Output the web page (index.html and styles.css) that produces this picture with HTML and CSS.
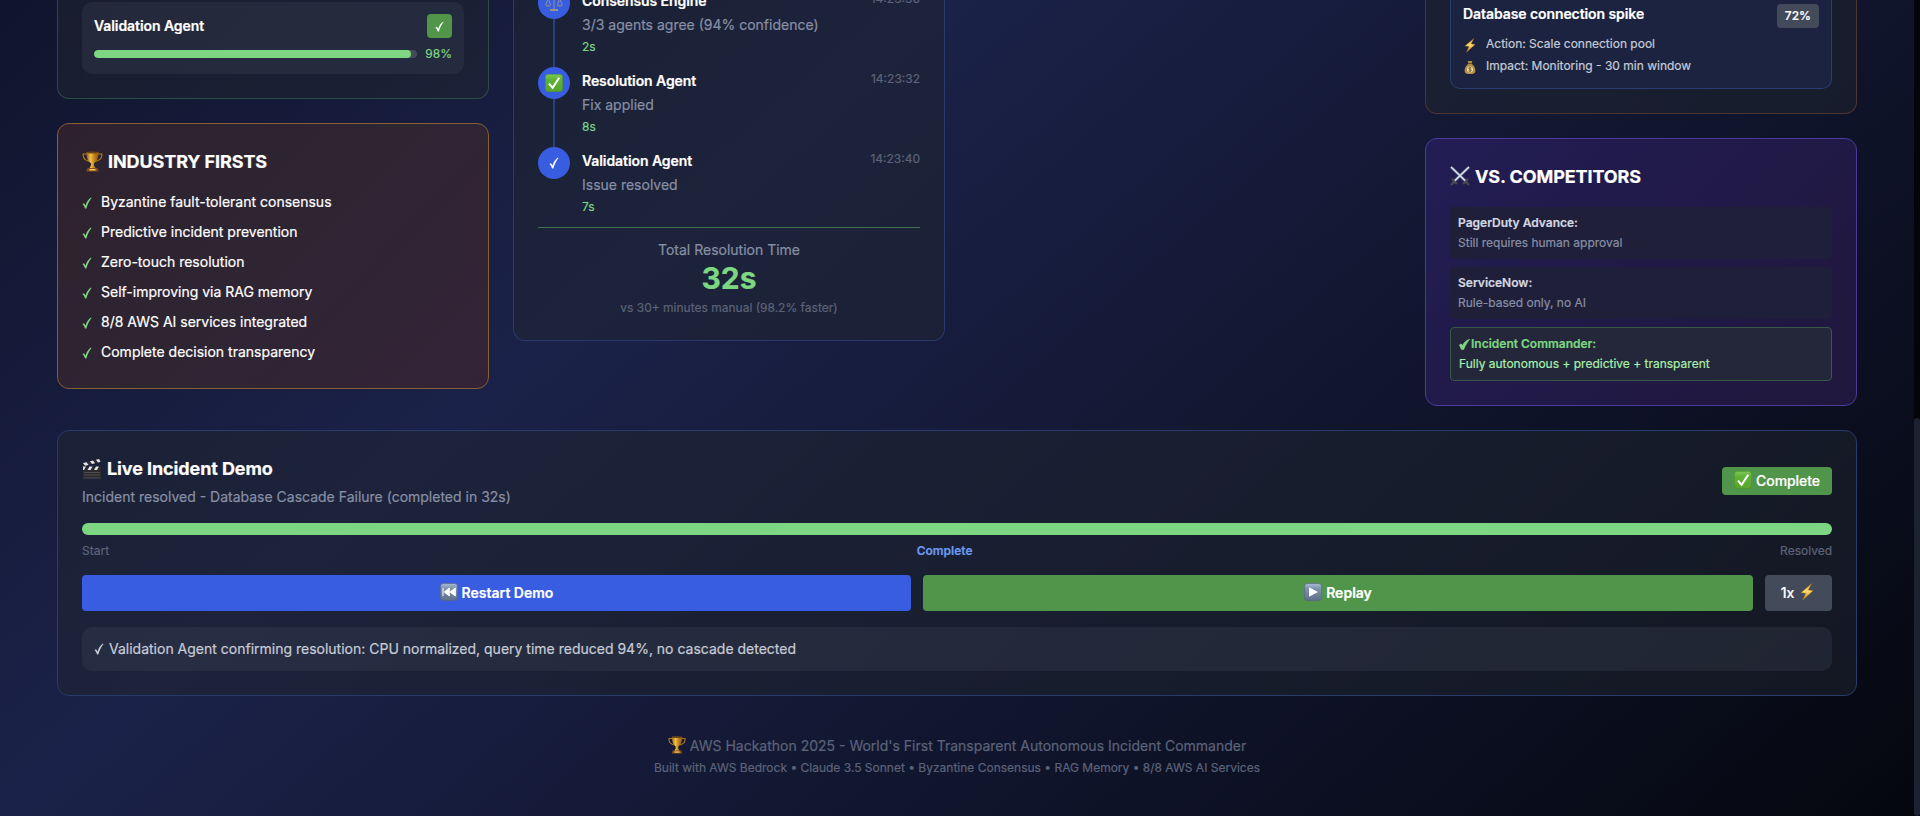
FILE: index.html
```html
<!DOCTYPE html>
<html lang="en">
<head>
<meta charset="utf-8">
<title>Autonomous Incident Commander</title>
<link rel="stylesheet" href="styles.css">
</head>
<body>
<svg class="defs" aria-hidden="true">
  <defs>
    <linearGradient id="gold" x1="0" x2="1"><stop offset="0" stop-color="#8f5a14"/><stop offset=".35" stop-color="#f0c24a"/><stop offset=".6" stop-color="#c88a22"/><stop offset="1" stop-color="#8a5412"/></linearGradient>
    <linearGradient id="grn" x1="0" y1="0" x2="0" y2="1"><stop offset="0" stop-color="#7fc95a"/><stop offset=".3" stop-color="#5fb338"/><stop offset="1" stop-color="#58a52c"/></linearGradient>
    <linearGradient id="key" x1="0" y1="0" x2="0" y2="1"><stop offset="0" stop-color="#a9bcd6"/><stop offset=".3" stop-color="#8093ae"/><stop offset="1" stop-color="#5d6f8a"/></linearGradient>
    <linearGradient id="bolt" x1="0" y1="0" x2="0" y2="1"><stop offset="0" stop-color="#d9952f"/><stop offset=".45" stop-color="#ffe067"/><stop offset="1" stop-color="#c97a25"/></linearGradient>
    <symbol id="i-trophy" viewBox="0 0 21 21">
      <path d="M5 3H1.2C.8 6.2 2.600 9.300 7.400 10.400M16 3h3.800c.4 3.200-1.400 6.300-6.200 7.400" fill="none" stroke="#b07a22" stroke-width="1.200"/>
      <path d="M4.300 1h12.400c-.2 6-1.900 9.600-4.700 11.200v2.300l1.800 3H7.200l1.800-3v-2.300C6.200 10.600 4.500 7 4.300 1z" fill="url(#gold)"/>
      <ellipse cx="10.500" cy="1.500" rx="6" ry=".9" fill="#6e4410"/>
      <path d="M5.500 17h10l1.200 3.500H4.300z" fill="#8a4b16"/><path d="M7.500 18h6v1.500h-6z" fill="#f2cf68"/>
    </symbol>
    <symbol id="i-check" viewBox="0 0 10 12"><path d="M.5 7.100 2 6.200 3.600 8.400C4.800 4.900 6.400 2.200 8.900.6l.6.500C7.200 4 5.600 7.400 4.300 11.600H3.100C2.500 9.900 1.700 8.300.5 7.100z" fill="currentColor"/></symbol>
    <symbol id="i-heavy" viewBox="0 0 11 11"><path d="M.2 6.200C1.200 4.400 2.700 4.700 3.600 6.300 5.200 3.300 7.200 1.200 10.900.1 8.600 2.900 6.400 6.500 4.900 10.300 3.500 11.100 2.300 11 2 10 1.600 8.500 1.100 7.200.2 6.200z" fill="currentColor" stroke="currentColor" stroke-width=".4"/></symbol>
    <symbol id="i-ok" viewBox="0 0 18 18"><rect x=".3" y=".3" width="17.400" height="17.400" rx="3" fill="url(#grn)" stroke="#468f25" stroke-width=".6"/><path d="M4 9.600 7.600 13.800 14.200 3.800" fill="none" stroke="#fff" stroke-width="2"/></symbol>
    <symbol id="i-bolt" viewBox="0 0 14 18"><path d="M11.600.5 1 9.700l4.800.5L2.600 17.300 13 7.700 8.300 7.100z" fill="url(#bolt)" stroke="#b26d1e" stroke-width=".4"/></symbol>
    <symbol id="i-bag" viewBox="0 0 12 14"><path d="M3.700.5h4.600L7.700 3.300C10 5 11.400 7.600 11.400 10.200c0 2.600-1.600 3.300-5.400 3.300S.6 12.800.6 10.200C.6 7.600 2 5 4.300 3.300z" fill="#b08d42"/><path d="M4 3h4" stroke="#6d4d1e" stroke-width="1"/><circle cx="6" cy="9" r="3.100" fill="#ecd9a0"/><path d="M7.500 7.700C6.700 6.800 4.700 7 4.800 8.100c.1 1.100 2.500.6 2.500 1.800 0 1.100-2 1.200-2.700.4M6 6.300v5.400" fill="none" stroke="#70511e" stroke-width=".8"/></symbol>
    <symbol id="i-swords" viewBox="0 0 20 20"><path d="M1 1 16 15.500M19 1 4 15.500" stroke="#6f7a90" stroke-width="2.600"/><path d="M1 1 15 14.500M19 1 5 14.500" stroke="#dde4f0" stroke-width="1.300"/><path d="M2.300 12.500c.5 2.600 2 4.200 5 5M17.700 12.500c-.5 2.600-2 4.200-5 5M4.500 15.500 1 19M15.500 15.500 19 19" fill="none" stroke="#4b4a50" stroke-width="1.900"/></symbol>
    <symbol id="i-clap" viewBox="0 0 20 21"><path d="M1 9h18v10.500a1 1 0 0 1-1 1H2a1 1 0 0 1-1-1z" fill="#2b2b2e"/><path d="M.7 5.200 18 .8l.8 3L1.500 8.200z" fill="#303034"/><path d="M1 5.100l3.500-.9 2 2.700-3.300.9zM8 3.300l3-.8 2 2.700-3 .8zM14 1.800l3-.8 1.500 2.700-2.500.7zM1 8.500h3L2 12H1zM7.500 8.500h3L8.500 12h-3zM14 8.500h3L15 12h-3z" fill="#e5e6e8"/><path d="M2 14.500h16M2 17h16M1.500 20h17" stroke="#59595c" stroke-width=".8"/></symbol>
    <symbol id="i-prev" viewBox="0 0 18 18"><rect x=".4" y=".4" width="17.200" height="17.200" rx="3" fill="url(#key)" stroke="#56657e" stroke-width=".7"/><path d="M3 5v8M9.300 5v8L4.300 9zM15.300 5v8L10 9z" fill="#fff" stroke="#fff" stroke-width="1"/></symbol>
    <symbol id="i-play" viewBox="0 0 18 18"><rect x=".4" y=".4" width="17.200" height="17.200" rx="3" fill="url(#key)" stroke="#56657e" stroke-width=".7"/><path d="M5 4.300v9.400L14 9z" fill="#fff"/></symbol>
    <symbol id="i-scales" viewBox="0 0 18 18"><path d="M9 1v14M3 4.500 9 3l6 1.500M3.200 4.500.8 11M3.200 4.500 5.600 11M14.800 4.500 12.400 11M14.800 4.500 17.200 11" fill="none" stroke="#8a8f9c" stroke-width="1"/><path d="M.4 11h5.600c-.5 2.400-5.100 2.400-5.600 0zM12 11h5.600c-.5 2.400-5.100 2.400-5.600 0z" fill="#7d8394"/><path d="M5 15h8v2H5z" fill="#9a9584"/></symbol>
  </defs>
</svg>
<div class="page">
  <main class="container">
    <div class="grid">
      <div class="column">
        <section class="card card-green cut cut-agents">
          <div class="agent">
            <div class="row"><span class="name">Validation Agent</span><span class="badge-check"><svg width="9" height="11"><use href="#i-check"/></svg></span></div>
            <div class="meter"><div class="track"><div class="fill" style="width:98%"></div></div><span>98%</span></div>
          </div>
        </section>
        <section class="card card-orange">
          <h3><svg width="21" height="21"><use href="#i-trophy"/></svg>INDUSTRY FIRSTS</h3>
          <ul class="firsts">
            <li><svg width="10" height="12"><use href="#i-check"/></svg>Byzantine fault-tolerant consensus</li>
            <li><svg width="10" height="12"><use href="#i-check"/></svg>Predictive incident prevention</li>
            <li><svg width="10" height="12"><use href="#i-check"/></svg>Zero-touch resolution</li>
            <li><svg width="10" height="12"><use href="#i-check"/></svg>Self-improving via RAG memory</li>
            <li><svg width="10" height="12"><use href="#i-check"/></svg>8/8 AWS AI services integrated</li>
            <li><svg width="10" height="12"><use href="#i-check"/></svg>Complete decision transparency</li>
          </ul>
        </section>
      </div>
      <div class="column">
        <section class="card card-blue cut cut-timeline">
          <div class="step">
            <div class="rail"><span class="dot"><svg width="18" height="18"><use href="#i-scales"/></svg></span><span class="line"></span></div>
            <div class="step-body"><div class="row"><span class="name">Consensus Engine</span><time>14:23:30</time></div><p>3/3 agents agree (94% confidence)</p><small>2s</small></div>
          </div>
          <div class="step">
            <div class="rail"><span class="dot"><svg width="18" height="18"><use href="#i-ok"/></svg></span><span class="line"></span></div>
            <div class="step-body"><div class="row"><span class="name">Resolution Agent</span><time>14:23:32</time></div><p>Fix applied</p><small>8s</small></div>
          </div>
          <div class="step">
            <div class="rail"><span class="dot"><svg width="10" height="12"><use href="#i-check"/></svg></span></div>
            <div class="step-body"><div class="row"><span class="name">Validation Agent</span><time>14:23:40</time></div><p>Issue resolved</p><small>7s</small></div>
          </div>
          <div class="total">
            <div class="total-label">Total Resolution Time</div>
            <div class="total-value">32s</div>
            <div class="total-note">vs 30+ minutes manual (98.2% faster)</div>
          </div>
        </section>
      </div>
      <div class="column"></div>
      <div class="column">
        <section class="card card-amber cut">
          <div class="prediction">
            <div class="row"><span class="name">Database connection spike</span><span class="pct">72%</span></div>
            <div class="facts">
              <div><svg width="12" height="15"><use href="#i-bolt"/></svg>Action: Scale connection pool</div>
              <div><svg width="12" height="15"><use href="#i-bag"/></svg>Impact: Monitoring - 30 min window</div>
            </div>
          </div>
        </section>
        <section class="card card-purple">
          <h3><svg width="20" height="20"><use href="#i-swords"/></svg>VS. COMPETITORS</h3>
          <div class="rivals">
            <div class="rival"><b>PagerDuty Advance:</b><span>Still requires human approval</span></div>
            <div class="rival"><b>ServiceNow:</b><span>Rule-based only, no AI</span></div>
            <div class="rival ours"><b><svg width="11" height="11"><use href="#i-heavy"/></svg>Incident Commander:</b><span>Fully autonomous + predictive + transparent</span></div>
          </div>
        </section>
      </div>
    </div>
    <section class="card card-blue demo">
      <div class="demo-head">
        <div><h3><svg width="20" height="21"><use href="#i-clap"/></svg>Live Incident Demo</h3><p>Incident resolved - Database Cascade Failure (completed in 32s)</p></div>
        <span class="done"><svg width="18" height="18"><use href="#i-ok"/></svg>Complete</span>
      </div>
      <div class="progress"></div>
      <div class="marks"><span>Start</span><b>Complete</b><span>Resolved</span></div>
      <div class="buttons">
        <button class="btn restart"><svg width="18" height="18"><use href="#i-prev"/></svg>Restart Demo</button>
        <button class="btn replay"><svg width="18" height="18"><use href="#i-play"/></svg>Replay</button>
        <button class="btn speed">1x<svg width="14" height="18"><use href="#i-bolt"/></svg></button>
      </div>
      <div class="status"><svg width="10" height="12"><use href="#i-check"/></svg>Validation Agent confirming resolution: CPU normalized, query time reduced 94%, no cascade detected</div>
    </section>
    <footer>
      <p class="foot-main"><svg width="18" height="18"><use href="#i-trophy"/></svg>AWS Hackathon 2025 - World's First Transparent Autonomous Incident Commander</p>
      <p class="foot-sub">Built with AWS Bedrock • Claude 3.5 Sonnet • Byzantine Consensus • RAG Memory • 8/8 AWS AI Services</p>
    </footer>
  </main>
</div>
<div class="scrollbar"><div class="thumb"></div></div>
</body>
</html>
```
FILE: styles.css
```css
* { box-sizing: border-box; margin: 0; padding: 0; }
html, body { height: 816px; overflow: hidden; }
body { display: flex; font: 14px/20px Inter, "Liberation Sans", sans-serif; color: #fff; background: #020308; -webkit-text-stroke: .2px; }
svg { flex: none; display: block; }
.defs { position: absolute; width: 0; height: 0; }
.page { flex: 1; height: 816px; overflow: hidden; background: linear-gradient(to bottom right, #05060f, #1b2249 50%, #05070f) 0 -857px / 1914px 1673px no-repeat; }
.container { width: 1800px; margin: 0 auto; }
.grid { display: grid; grid-template-columns: repeat(4, 1fr); gap: 24px; align-items: start; }
.column { display: flex; flex-direction: column; gap: 24px; }
.card { border: 1px solid; border-radius: 12px; padding: 24px; background: rgba(31, 37, 47, .55); }
.cut { border-top: 0; border-radius: 0 0 12px 12px; padding-top: 0; }
.cut-agents { padding-top: 2px; }
.card-green { border-color: #2c4c43; }
.card-blue { border-color: #293a6c; }
.card-amber { border-color: #4e352f; }
.card-orange { border-color: #8a5d33; background: linear-gradient(135deg, #2e212d, #2e2533 50%, #342337); }
.card-purple { border-color: #4d3a9c; background: linear-gradient(135deg, #221d54, #20173c); }
.row { display: flex; justify-content: space-between; align-items: flex-start; }
.name { font-weight: 600; letter-spacing: -.08px; }
h3 { display: flex; align-items: center; gap: 5px; font-size: 18px; line-height: 28px; font-weight: 700; letter-spacing: -.1px; }
h3 svg { position: relative; top: -1px; }

.agent { background: rgba(64, 70, 86, .3); border-radius: 10px; padding: 12px; }
.agent .row { align-items: center; margin-bottom: 8px; }
.badge-check { display: flex; align-items: center; justify-content: center; width: 25px; height: 24px; border-radius: 4px; background: #51954b; }
.meter { display: flex; align-items: center; gap: 8px; font-size: 12px; line-height: 16px; color: #7dd681; }
.track { flex: 1; height: 8px; border-radius: 4px; background: #434b5b; overflow: hidden; }
.fill { height: 100%; border-radius: 4px; background: #7dd681; }

.firsts { list-style: none; display: flex; flex-direction: column; gap: 8px; margin-top: 16px; }
.firsts li { display: flex; gap: 9px; height: 22px; }
.firsts svg { color: #7dd681; margin-top: 5px; }

.step { display: flex; gap: 12px; }
.cut-timeline .step:first-child { margin-top: -13px; }
.rail { width: 32px; display: flex; flex-direction: column; align-items: center; }
.dot { width: 32px; height: 32px; border-radius: 50%; background: #385de0; display: flex; align-items: center; justify-content: center; }
.line { width: 2px; flex: 1; background: #2b3f7d; }
.step-body { flex: 1; padding: 4px 0 12px; }
.step-body time { font-size: 12px; line-height: 16px; color: #5c6379; }
.step-body p { margin: 4px 0; color: #878fa5; }
.step-body small { display: block; font-size: 12px; line-height: 16px; color: #7dd681; }
.total { border-top: 1px solid #3f7050; padding-top: 12px; text-align: center; }
.total-label { color: #878fa5; }
.total-value { font-size: 30px; line-height: 36px; font-weight: 700; color: #7dd681; }
.total-note { margin-top: 4px; font-size: 12px; line-height: 16px; color: #5c6379; }

.prediction { border: 1px solid #293d72; border-top: 0; border-radius: 0 0 10px 10px; padding: 4px 12px 12px; background: #1b2340; }
.pct { font-size: 12px; line-height: 16px; font-weight: 500; padding: 4px 8px; border-radius: 4px; background: #434b5b; }
.facts { margin-top: 8px; display: flex; flex-direction: column; gap: 4px; font-size: 12px; line-height: 16px; color: #c6cbd6; }
.facts div { display: flex; gap: 10px; height: 18px; padding-left: 1px; }
.facts svg { margin-top: 2px; }

.rivals { margin-top: 16px; display: flex; flex-direction: column; gap: 8px; font-size: 12px; line-height: 16px; }
.rival { padding: 8px; border-radius: 4px; background: #1f1f3a; color: #878fa5; display: flex; flex-direction: column; gap: 4px; }
.rival b { font-weight: 600; color: #d4d7e0; display: flex; align-items: center; gap: 1px; }
.ours { border: 1px solid #365846; background: #232739; color: #a9eeab; }
.ours b { color: #7dd681; }

.demo { margin-top: 24px; }
.demo-head { display: flex; justify-content: space-between; align-items: center; }
.demo-head p { margin-top: 4px; color: #878fa5; }
.done { display: flex; align-items: center; justify-content: center; gap: 4px; width: 110px; height: 28px; border-radius: 4px; background: #51954b; font-weight: 500; letter-spacing: -.08px; }
.done svg { margin-top: -2px; }
.progress { margin-top: 16px; height: 12px; border-radius: 6px; background: #7dd681; }
.marks { margin-top: 8px; display: flex; justify-content: space-between; font-size: 12px; line-height: 16px; color: #5c6379; }
.marks b { font-weight: 600; color: #6d9bf0; }
.buttons { display: flex; gap: 12px; margin-top: 16px; }
.btn { flex: 1; height: 36px; border: 0; border-radius: 4px; color: #fff; font: 600 14px/20px Inter, "Liberation Sans", sans-serif; display: flex; align-items: center; justify-content: center; gap: 4px; }
.btn svg { margin-top: -2px; }
.restart { flex: none; width: 829px; background: #385de0; }
.replay { background: #51954b; }
.speed { flex: none; width: 67px; padding-right: 2px; background: #434b5b; font-weight: 500; gap: 6px; }
.status { margin-top: 16px; display: flex; align-items: center; gap: 5px; padding: 12px; border-radius: 10px; background: rgba(64, 70, 86, .3); color: #c6cbd6; }
footer { margin-top: 40px; text-align: center; color: #5c6379; }
.foot-main { display: flex; align-items: center; justify-content: center; gap: 4px; }
.foot-main svg { margin-top: -2px; }
.foot-sub { margin-top: 4px; font-size: 12px; line-height: 16px; }
.scrollbar { width: 6px; height: 816px; padding-top: 418px; background: #03050b; }
.thumb { height: 398px; border-radius: 3px; background: #1d2230; }
```
